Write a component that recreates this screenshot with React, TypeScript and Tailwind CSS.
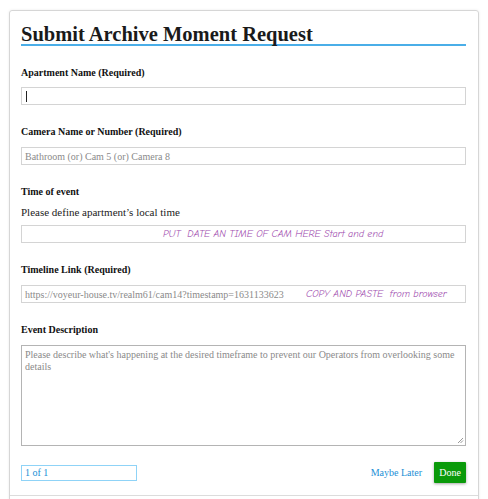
import React from "react";

const comic = { fontFamily: '"Comic Sans MS", "Comic Neue", "DejaVu Sans", sans-serif' };

function Label({ children, className = "" }: { children: React.ReactNode; className?: string }) {
  return <div className={"text-[10px] font-bold leading-[13px] text-[#111] " + className}>{children}</div>;
}

function Field({ children, className = "" }: { children?: React.ReactNode; className?: string }) {
  return (
    <div
      className={
        "relative flex h-[18px] items-center overflow-hidden border border-[#d4d4d4] bg-white pl-[3px] text-[10px] leading-[13px] " +
        className
      }
    >
      {children}
    </div>
  );
}

export default function App() {
  return (
    <div className="min-h-[499px] bg-white pt-[10px] font-['Liberation_Serif','Times_New_Roman',serif]">
      <div className="mx-[9px] w-[470px] rounded-t-[3px] border border-[#d6d6d6] shadow-[0_0_3px_rgba(0,0,0,0.08)]">
        <div className="pt-[13px] pr-[12px] pb-[12px] pl-[11px]">
          <h1 className="h-[22px] border-b-2 border-[#4aaee8] text-[20.5px] leading-[20px] font-bold text-[#1a1a1a]">
            Submit Archive Moment Request
          </h1>

          <Label className="mt-[20px]">Apartment Name (Required)</Label>
          <Field className="mt-[8px]">
            <span className="ml-[1px] h-[11px] w-[1px] bg-[#222]" />
          </Field>

          <Label className="mt-[20px]">Camera Name or Number (Required)</Label>
          <Field className="mt-[9px] text-[#8a8a8a]">Bathroom (or) Cam 5 (or) Camera 8</Field>

          <Label className="mt-[20px]">Time of event</Label>
          <div className="mt-[8px] text-[11px] leading-[13px] text-[#222]">Please define apartment’s local time</div>
          <Field className="mt-[6px]">
            <span className="ml-[138px] whitespace-pre text-[10px] italic text-[#a24fb0]" style={comic}>
              PUT  DATE AN TIME OF CAM HERE Start and end
            </span>
          </Field>

          <Label className="mt-[20px]">Timeline Link (Required)</Label>
          <Field className="mt-[9px] text-[#8a8a8a]">
            <span>https://voyeur-house.tv/realm61/cam14?timestamp=1631133623</span>
            <span
              className="absolute left-[284px] whitespace-pre text-[10px] italic text-[#a24fb0]"
              style={comic}
            >
              COPY AND PASTE  from browser
            </span>
          </Field>

          <Label className="mt-[20px]">Event Description</Label>
          <div className="relative mt-[9px] h-[101px] border border-[#b4b4b4] px-[3px] pt-[3px] text-[10px] leading-[12px] text-[#8a8a8a]">
            Please describe what's happening at the desired timeframe to prevent our Operators from overlooking some
            details
            <svg className="absolute right-[1px] bottom-[1px]" width="7" height="7" viewBox="0 0 7 7">
              <path d="M6 1 L1 6 M6 3.5 L3.5 6" stroke="#9a9a9a" strokeWidth="1" />
            </svg>
          </div>

          <div className="mt-[16px] flex h-[21px] items-center">
            <div className="flex h-[16px] w-[116px] items-center border border-[#8fd3f7] pl-[3px] text-[10px] leading-[13px] text-[#1b8fd6]">
              1 of 1
            </div>
            <span className="ml-auto text-[10px] text-[#1b8fd6]">Maybe Later</span>
            <button className="ml-[12px] h-[21px] w-[32px] rounded-[1px] bg-[#0a9a0a] text-[10px] text-white shadow-[0_1px_3px_rgba(0,0,0,0.35)]">
              Done
            </button>
          </div>
        </div>
        <div className="h-[6px] border-t border-[#dcdcdc]" />
      </div>
    </div>
  );
}
